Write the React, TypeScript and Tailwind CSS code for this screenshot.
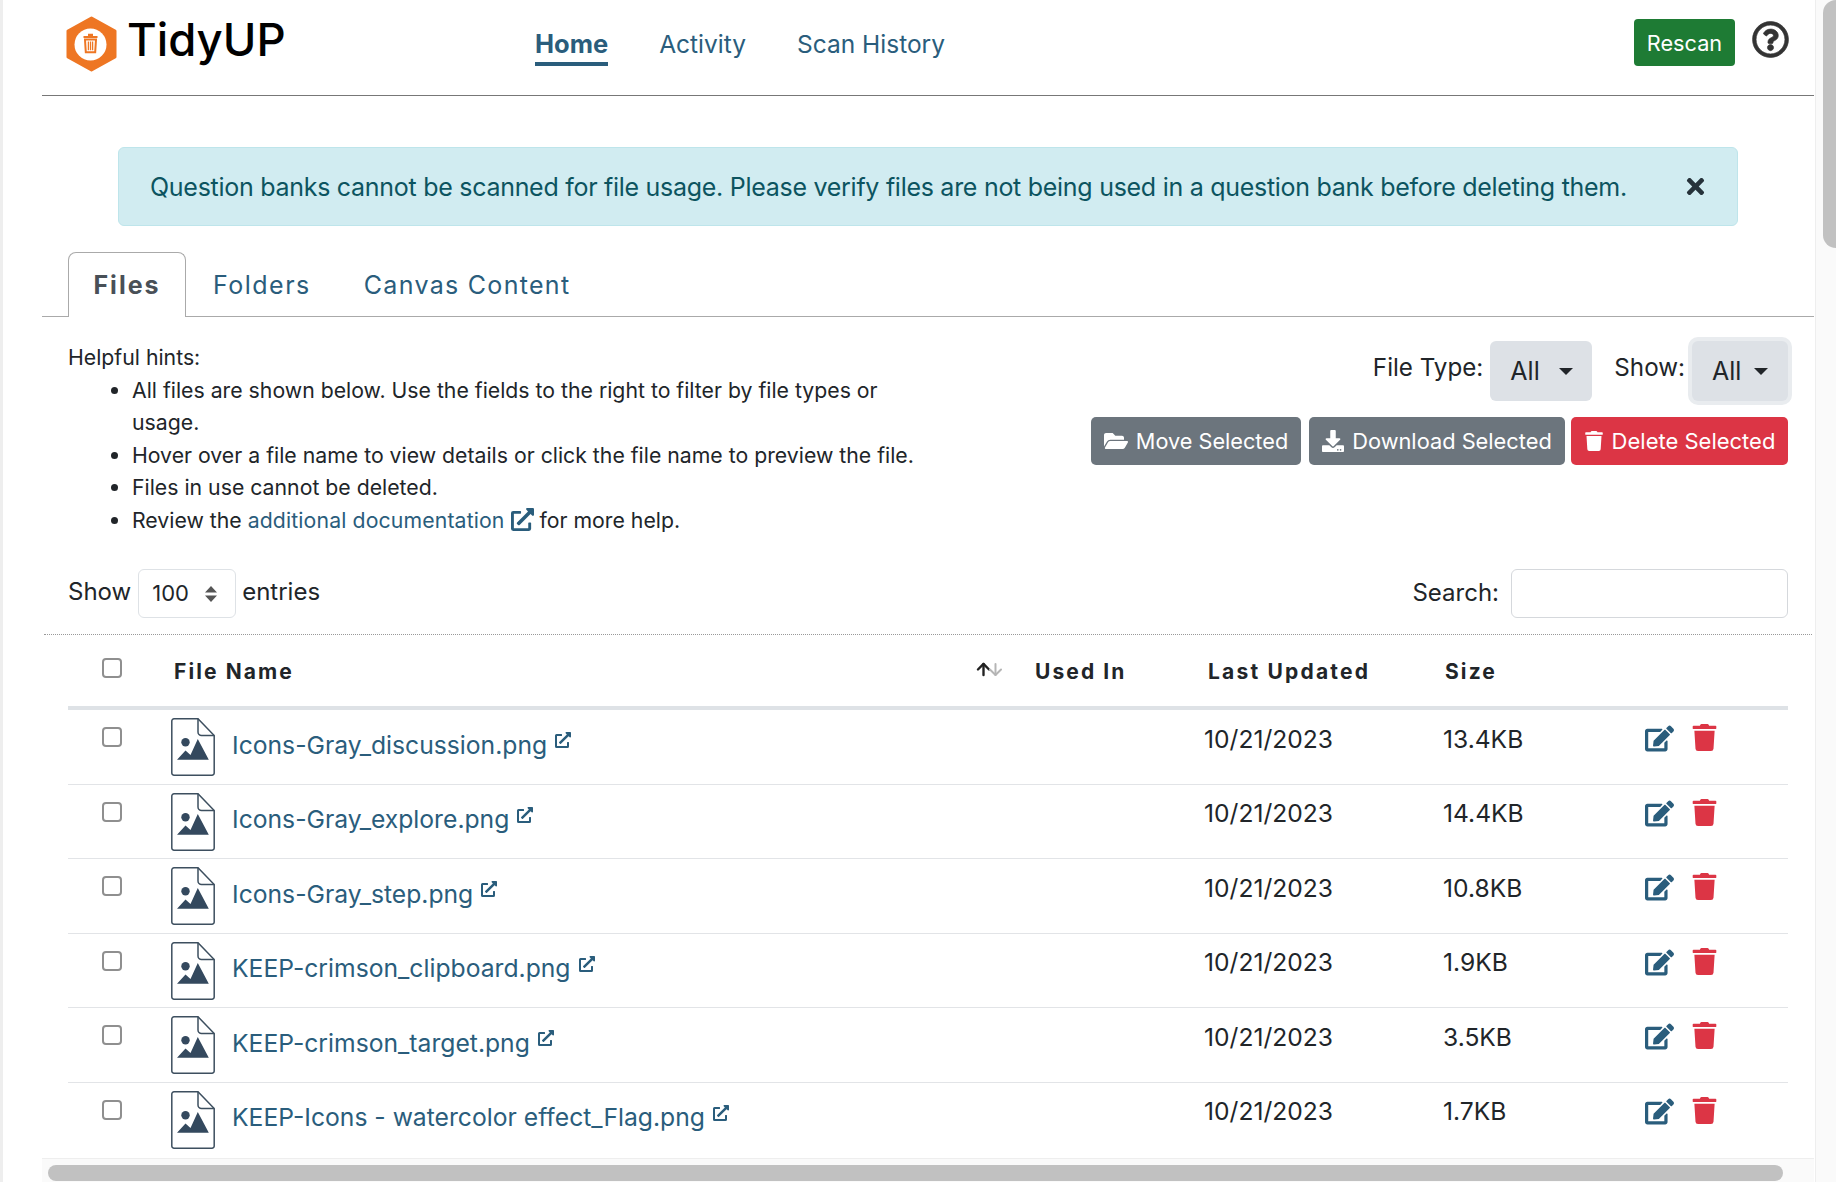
import React from 'react';
import { ArrowUp, ArrowDown } from 'lucide-react';
import { FaDownload, FaEdit, FaExternalLinkAlt, FaFolderOpen, FaRegQuestionCircle, FaTimes, FaTrash } from 'react-icons/fa';

const files = [
  { name: 'Icons-Gray_discussion.png', size: '13.4KB' },
  { name: 'Icons-Gray_explore.png', size: '14.4KB' },
  { name: 'Icons-Gray_step.png', size: '10.8KB' },
  { name: 'KEEP-crimson_clipboard.png', size: '1.9KB' },
  { name: 'KEEP-crimson_target.png', size: '3.5KB' },
  { name: 'KEEP-Icons - watercolor effect_Flag.png', size: '1.7KB' },
];

const gridCols = 'grid grid-cols-[103px_862px_171px_239px_202px_143px]';

function Logo() {
  return (
    <svg width="51" height="56" viewBox="0 0 51 56" className="shrink-0">
      <path d="M25.5 2 L49 15 V41 L25.5 54 L2 41 V15 Z" fill="#ee7623" stroke="#ee7623" strokeWidth="3" strokeLinejoin="round" />
      <circle cx="24.5" cy="28.5" r="16" fill="#fff" />
      <path d="M17.5 20h14v2h-14z M22 17.8h5v2.2h-5z" fill="#ee7623" />
      <path d="M19 23.5h11l-.8 12.7h-9.4z" fill="none" stroke="#ee7623" strokeWidth="2" />
      <path d="M22.4 25.5v8.8 M24.5 25.5v8.8 M26.6 25.5v8.8" stroke="#ee7623" strokeWidth="1.3" />
    </svg>
  );
}

function FileImageIcon() {
  return (
    <svg width="44" height="58" viewBox="0 0 44 58" className="shrink-0">
      <path d="M3 0.8 H27 L43.2 17.5 V55 a2.2 2.2 0 0 1 -2.2 2.2 H3 a2.2 2.2 0 0 1 -2.2 -2.2 V3 a2.2 2.2 0 0 1 2.2 -2.2 Z" fill="#fff" stroke="#3d4f5f" strokeWidth="1.5" />
      <path d="M27 0.8 V14 a3.5 3.5 0 0 0 3.5 3.5 H43.2" fill="none" stroke="#3d4f5f" strokeWidth="1.5" />
      <circle cx="14.5" cy="24.3" r="4.2" fill="#34495e" />
      <path d="M6 41.7 L14.5 32.5 L19.5 37 L26.8 21 L37.8 41.7 Z" fill="#34495e" />
    </svg>
  );
}

function Checkbox() {
  return <div className="ml-[34px] h-[20px] w-[20px] rounded-[4px] border-2 border-[#8f8f8f] bg-white" />;
}

function Caret() {
  return <span className="h-0 w-0 border-x-[7px] border-t-[7px] border-x-transparent border-t-[#212529]" />;
}

function ActionButton({ icon, label, className }: { icon: React.ReactNode; label: string; className: string }) {
  return (
    <button className={`flex h-[48px] items-center justify-center gap-[8px] rounded-[5px] text-white ${className}`}>
      {icon}
      {label}
    </button>
  );
}

function FileRow({ name, size }: { name: string; size: string }) {
  return (
    <div className={`${gridCols} h-[74.5px] items-start border-b border-[#e2e4e7] last:border-b-0`}>
      <div className="pt-[17px]"><Checkbox /></div>
      <div className="flex items-center pt-[8px]">
        <FileImageIcon />
        <span className="mb-[3px] ml-[17px] text-[24.7px] text-[#2a5d7c]">{name}</span>
        <FaExternalLinkAlt size={16} className="mb-[14px] ml-[8px] text-[#2a5d7c]" />
      </div>
      <div />
      <div className="pt-[12.5px] text-[24.6px] leading-[32px]">10/21/2023</div>
      <div className="pt-[12.5px] text-[24.6px] leading-[32px]">{size}</div>
      <div className="flex gap-[17px] pt-[14px]">
        <FaEdit size={29} className="text-[#2a5d7c]" />
        <FaTrash size={27} className="text-[#dc3545]" />
      </div>
    </div>
  );
}

export default function App() {
  return (
    <div className="flex h-[1182px] w-[1836px] overflow-hidden bg-white font-['Inter',sans-serif] text-[#212529]">
      <div className="w-[3px] shrink-0 bg-[#eeeeee]" />
      <div className="flex w-[1812px] shrink-0 flex-col pl-[39px] pr-[1px]">
        <div className="min-h-0 flex-1 overflow-hidden">
          {/* top nav */}
          <div className="flex h-[96px] items-start border-b border-[#777777] pl-[24px] pr-[25px]">
            <div className="flex w-[469px] items-center pt-[16px]">
              <Logo />
              <span className="-mt-[8px] ml-[10px] text-[45.5px] font-medium leading-[56px] text-black">TidyUP</span>
            </div>
            <nav className="flex gap-[51px] pt-[26px] text-[24.5px] text-[#2a5d7c]">
              <a className="h-[40px] border-b-4 border-[#2a5d7c] text-[25.5px] font-bold leading-[36px]">Home</a>
              <a className="leading-[36px]">Activity</a>
              <a className="leading-[36px]">Scan History</a>
            </nav>
            <div className="ml-auto flex gap-[17px] pt-[19px]">
              <button className="h-[47px] w-[101px] rounded-[4px] bg-[#1e7b34] pt-px text-[21.7px] text-white">Rescan</button>
              <FaRegQuestionCircle size={37} strokeWidth={10} className="mt-[2px] text-[#333333]" />
            </div>
          </div>

          {/* alert */}
          <div className="mx-[76px] mt-[51px] flex h-[79px] items-center justify-between rounded-[6px] border border-[#bee5eb] bg-[#d1ecf1] pl-[31px] pr-[29px] text-[25px] tracking-[-0.28px] text-[#0c5460]">
            <span className="whitespace-nowrap pt-[2px]">Question banks cannot be scanned for file usage. Please verify files are not being used in a question bank before deleting them.</span>
            <FaTimes size={25} className="text-[#26323a]" />
          </div>

          {/* tabs */}
          <div className="mt-[26px] flex h-[65px] items-end border-b border-[#aaaaaa] pl-[26px] text-[25px] tracking-[1.3px]">
            <div className="-mb-px flex h-[65px] w-[118px] items-center justify-center rounded-t-[8px] border border-b-0 border-[#aaaaaa] bg-white pt-[2px] font-bold tracking-[2px] text-[#495057]">Files</div>
            <div className="flex h-[64px] items-center pl-[27px] pt-[3px] tracking-[1.5px] text-[#2a5d7c]">Folders</div>
            <div className="flex h-[64px] items-center pl-[53px] pt-[3px] text-[#2a5d7c]">Canvas Content</div>
          </div>

          {/* hints and filters */}
          <div className="flex h-[252px] justify-between pl-[26px] pr-[26px] pt-[24px] text-[21.25px] leading-[32.5px]">
            <div className="w-[860px]">
              <p>Helpful hints:</p>
              <ul className="list-disc pl-[64px]">
                <li>All files are shown below. Use the fields to the right to filter by file types or usage.</li>
                <li>Hover over a file name to view details or click the file name to preview the file.</li>
                <li>Files in use cannot be deleted.</li>
                <li>
                  Review the <a className="tracking-[0.12px] text-[#2a5d7c]">additional documentation</a>
                  <FaExternalLinkAlt size={23} className="mx-[6px] inline align-[-3px] text-[#2a5d7c]" />
                  for more help.
                </li>
              </ul>
            </div>
            <div className="flex flex-col items-end">
              <div className="flex h-[60px] items-center text-[24.2px]">
                <span className="mb-[6px]">File Type:</span>
                <div className="ml-[7px] flex h-[60px] w-[102px] items-center justify-between rounded-[6px] bg-[#dde1e6] pl-[20px] pr-[19px] pt-px text-[25px]">
                  All <Caret />
                </div>
                <span className="mb-[6px] ml-[22px]">Show:</span>
                <div className="ml-[7px] flex h-[60px] w-[96px] items-center justify-between rounded-[6px] bg-[#dde1e6] pl-[20px] pr-[20px] pt-px text-[25px] ring-[4px] ring-[#e9ecef]">
                  All <Caret />
                </div>
              </div>
              <div className="mt-[16px] flex">
                <ActionButton className="w-[210px] bg-[#6c757d] text-[21.7px]" label="Move Selected" icon={<FaFolderOpen size={24} />} />
                <ActionButton className="ml-[8px] w-[256px] bg-[#6c757d] text-[21.8px]" label="Download Selected" icon={<FaDownload size={22} />} />
                <ActionButton className="ml-[6px] w-[217px] bg-[#dc3545] text-[22px]" label="Delete Selected" icon={<FaTrash size={20} />} />
              </div>
            </div>
          </div>

          {/* entries and search */}
          <div className="flex h-[49px] items-center justify-between pl-[26px] pr-[26px] text-[24px]">
            <div className="flex items-center">
              <span className="mb-[3px]">Show</span>
              <div className="ml-[7px] flex h-[49px] w-[98px] items-center justify-between rounded-[6px] border border-[#dee2e6] pl-[13px] pr-[17px] text-[22px]">
                100
                <svg width="14" height="16" viewBox="0 0 14 16"><path d="M7 0 L13 6.5 H1 Z M7 16 L1 9.5 H13 Z" fill="#555" /></svg>
              </div>
              <span className="mb-[3px] ml-[6px]">entries</span>
            </div>
            <div className="flex items-center">
              <span className="mb-[1px]">Search:</span>
              <div className="ml-[12px] h-[49px] w-[277px] rounded-[6px] border border-[#d5d8dc]" />
            </div>
          </div>

          {/* table */}
          <div className="mx-[2px] mt-[16px] border-b border-dotted border-[#999999]" />
          <div className="mx-[26px]">
            <div className={`${gridCols} h-[75px] items-start border-b-4 border-[#dee2e6]`}>
              <div className="pt-[23px]"><Checkbox /></div>
              <div className="flex justify-between pl-[3px] pr-[28px] pt-[21px] text-[21px] font-bold tracking-[2.1px]">
                <span>File Name</span>
                <span className="flex pt-[4px]">
                  <ArrowUp size={19} strokeWidth={3} className="-mr-[7px] text-[#222222]" />
                  <ArrowDown size={19} strokeWidth={2.5} className="text-[#b5b5b5]" />
                </span>
              </div>
              <div className="pl-[2px] pt-[21px] text-[21px] font-bold tracking-[2.1px]">Used In</div>
              <div className="pl-[4px] pt-[21px] text-[21px] font-bold tracking-[2.2px]">Last Updated</div>
              <div className="pl-[2px] pt-[21px] text-[21px] font-bold tracking-[2.1px]">Size</div>
              <div />
            </div>
            {files.map((file) => (
              <FileRow key={file.name} name={file.name} size={file.size} />
            ))}
          </div>
        </div>

        {/* horizontal scrollbar */}
        <div className="h-[24px] shrink-0 border-t border-[#eeeeee] bg-[#fafafa] pl-[6px] pr-[31px] pt-[6px]">
          <div className="h-[16px] rounded-full bg-[#c1c1c1]" />
        </div>
      </div>

      {/* vertical scrollbar */}
      <div className="flex-1 border-l border-[#eeeeee] bg-[#fafafa] pl-[7px]">
        <div className="h-[248px] rounded-l-full bg-[#c1c1c1]" />
      </div>
    </div>
  );
}
